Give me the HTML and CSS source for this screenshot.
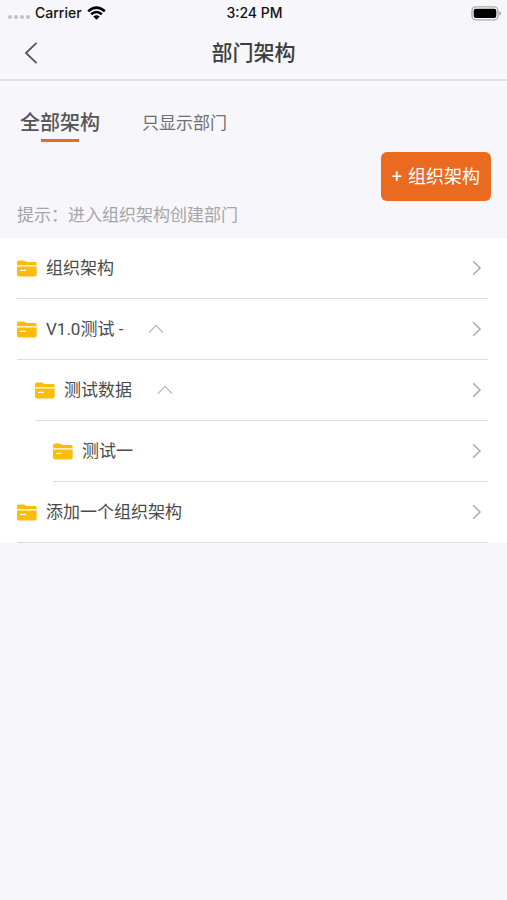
FILE: index.html
```
<!DOCTYPE html>
<html lang="zh-CN">
<head>
<meta charset="utf-8">
<meta name="viewport" content="width=device-width, initial-scale=1">
<title>部门架构</title>
<link rel="stylesheet" href="styles.css">
</head>
<body>
<svg class="sprite" aria-hidden="true">
  <symbol id="folder" viewBox="0 0 20 17">
    <path fill="#fdbb0a" d="M0 5.2V2.2Q0 .4 1.8.4H6.6Q7.4.4 8 1L9.2 2H18Q19.7 2 19.7 3.7V5.2Z"/>
    <path fill="#fdbb0a" d="M0 6.4H19.7V14.6Q19.7 16.4 17.9 16.4H1.8Q0 16.4 0 14.6Z"/>
    <path stroke="#fff" stroke-width="1.2" stroke-linecap="round" d="M3.6 10.4H8.4"/>
  </symbol>
  <symbol id="next" viewBox="0 0 10 16">
    <path fill="none" stroke="#aaa" stroke-width="1.5" d="M1.2 1.2 8 8 1.2 14.8"/>
  </symbol>
  <symbol id="up" viewBox="0 0 16 10">
    <path fill="none" stroke="#b5b5b5" stroke-width="1.3" d="M1 8.6 8 1.4 15 8.6"/>
  </symbol>
</svg>

<header class="header">
  <div class="status">
    <div class="carrier">
      <span class="signal"><i></i><i></i><i></i><i></i></span>
      <span>Carrier</span>
      <svg class="wifi" viewBox="0 0 19 14" aria-hidden="true">
        <g fill="none" stroke="#000" stroke-width="2.5">
          <path d="M1.2 5.2Q9.5-2 17.8 5.2"/>
          <path d="M4.1 8.3Q9.5 3.8 14.9 8.3"/>
        </g>
        <path d="M6.3 10.5Q9.5 7.9 12.7 10.5L9.5 13.8Z"/>
      </svg>
    </div>
    <time>3:24 PM</time>
    <svg class="battery" viewBox="0 0 30 15" aria-hidden="true">
      <rect x="1" y=".9" width="26" height="13" rx="4" fill="#fff" stroke="#aaa" stroke-width="1.4"/>
      <rect x="2.7" y="2.7" width="22.6" height="9.4" rx="2"/>
      <path fill="#999" d="M28.4 5.2Q30 5.8 30 7.4T28.4 9.6Z"/>
    </svg>
  </div>
  <div class="nav">
    <button class="back" type="button" aria-label="返回">
      <svg viewBox="0 0 14 24" aria-hidden="true"><path fill="none" stroke="#555" stroke-width="1.8" d="M12.5 1.8 2 12 12.5 22.2"/></svg>
    </button>
    <h1>部门架构</h1>
  </div>
</header>

<main>
  <nav class="tabs">
    <a class="tab active" href="#all" aria-current="page">全部架构</a>
    <a class="tab" href="#departments">只显示部门</a>
  </nav>
  <div class="actions">
    <button class="add" type="button"><span>+</span>组织架构</button>
  </div>
  <p class="hint">提示：进入组织架构创建部门</p>

  <ul class="list">
    <li><a class="row" href="#1"><svg class="folder"><use href="#folder"/></svg><span>组织架构</span><svg class="next"><use href="#next"/></svg></a></li>
    <li><a class="row" href="#2"><svg class="folder"><use href="#folder"/></svg><span>V1.0测试 -</span><svg class="up"><use href="#up"/></svg><svg class="next"><use href="#next"/></svg></a></li>
    <li class="level-2"><a class="row" href="#3"><svg class="folder"><use href="#folder"/></svg><span>测试数据</span><svg class="up"><use href="#up"/></svg><svg class="next"><use href="#next"/></svg></a></li>
    <li class="level-3"><a class="row" href="#4"><svg class="folder"><use href="#folder"/></svg><span>测试一</span><svg class="next"><use href="#next"/></svg></a></li>
    <li><a class="row" href="#5"><svg class="folder"><use href="#folder"/></svg><span>添加一个组织架构</span><svg class="next"><use href="#next"/></svg></a></li>
  </ul>
</main>
</body>
</html>
```
FILE: styles.css
```
* { box-sizing: border-box; }

body {
  margin: 0;
  min-height: 100vh;
  background: #f6f6fb;
  color: #4a4a4a;
  font-family: Roboto, "Noto Sans CJK SC", sans-serif;
  font-size: 17px;
  line-height: 24px;
}

a { color: inherit; text-decoration: none; }

button {
  border: 0;
  font: inherit;
  cursor: pointer;
}

svg { display: block; flex: none; }

.sprite { position: absolute; width: 0; height: 0; }

.header { border-bottom: 2px solid #dfdfe3; }

.status {
  display: grid;
  grid-template-columns: 1fr auto 1fr;
  align-items: center;
  height: 26px;
  padding: 0 6px 0 8px;
  color: #111;
  font-family: Inter, "Liberation Sans", sans-serif;
  font-size: 14px;
  font-weight: 500;
}

.carrier { display: flex; align-items: center; gap: 5px; }

.signal { display: flex; gap: 2px; padding-top: 8px; }

.signal i {
  width: 4px;
  height: 4px;
  border-radius: 50%;
  background: #c2c2c6;
}

.wifi { width: 19px; height: 14px; }

.battery { width: 30px; height: 15px; justify-self: end; }

.nav {
  display: grid;
  grid-template-columns: 1fr auto 1fr;
  align-items: center;
  height: 53px;
}

.back {
  justify-self: start;
  padding: 8px 24px;
  background: none;
}

.back svg { width: 14px; height: 24px; }

h1 {
  margin: 0;
  color: #3c3c3c;
  font-size: 21px;
  font-weight: 500;
}

.tabs {
  display: flex;
  align-items: center;
  gap: 42px;
  padding: 30px 20px 0;
}

.tab {
  padding-bottom: 8px;
  color: #707070;
}

.tab::after {
  content: "";
  display: block;
  width: 38px;
  height: 3px;
  margin: 4px auto -8px;
}

.tab.active {
  color: #555;
  font-size: 20px;
  font-weight: 500;
}

.tab.active::after { background: #e66b22; }

.actions {
  display: flex;
  justify-content: flex-end;
  padding: 10px 16px 0;
}

.add {
  display: flex;
  align-items: center;
  gap: 6px;
  height: 49px;
  padding: 0 11px;
  border-radius: 6px;
  background: #ea6b1f;
  color: #fff;
  font-size: 18px;
}

.hint {
  margin: 0;
  padding: 2px 17px 11px;
  color: #a5a5a8;
}

.list {
  margin: 0;
  padding: 0 19px 0 17px;
  background: #fff;
  list-style: none;
}

.level-2 { padding-left: 18px; }

.level-3 { padding-left: 36px; }

.row {
  display: flex;
  align-items: center;
  height: 61px;
  padding-right: 6px;
  border-bottom: 1px solid #dcdcde;
}

.folder { width: 20px; height: 17px; margin-right: 9px; }

.up { width: 16px; height: 10px; margin-left: 25px; }

.next { width: 10px; height: 16px; margin-left: auto; }
```
